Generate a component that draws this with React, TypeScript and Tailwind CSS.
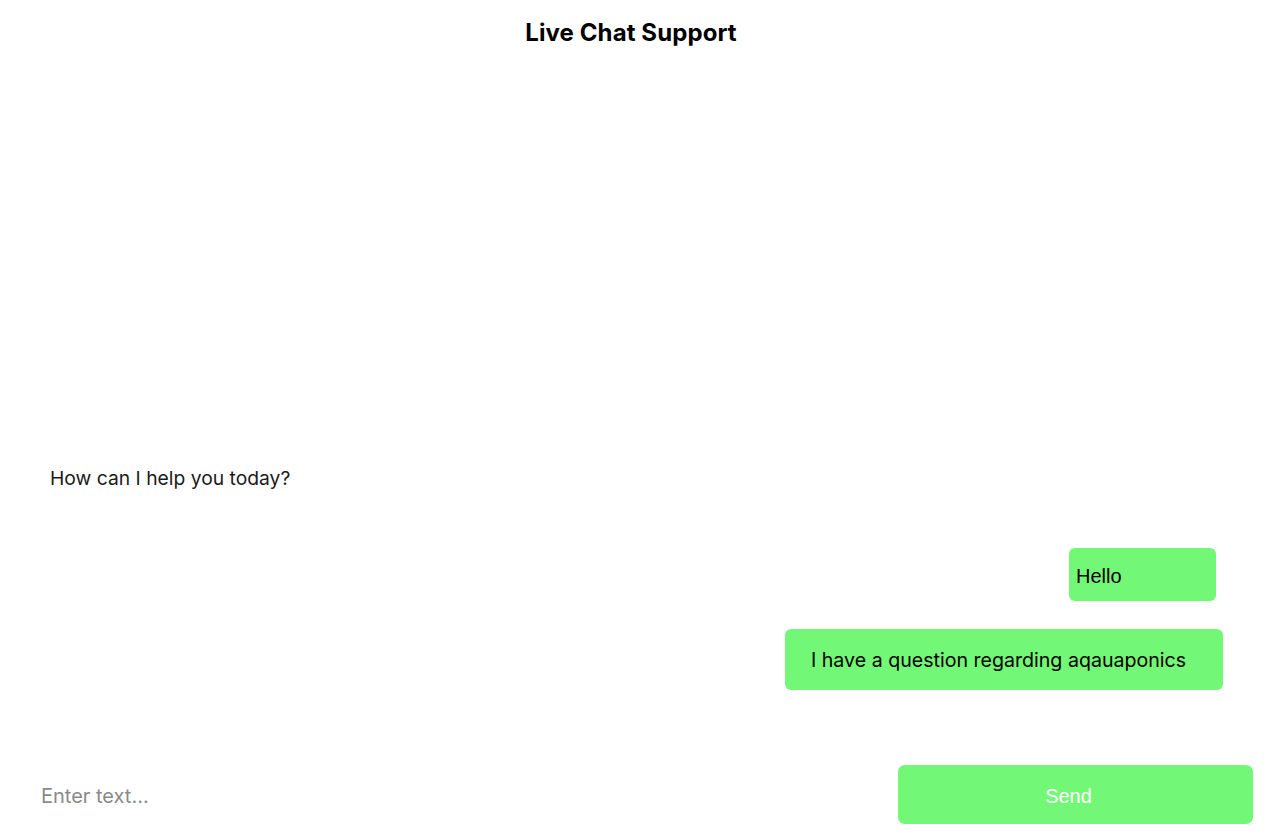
import React from "react";

export default function App() {
  return (
    <div className="flex h-[839px] w-[1284px] flex-col bg-white" style={{ fontFamily: "Inter, 'Noto Sans', sans-serif" }}>
      <div className="flex justify-center pt-[17px] pr-[22px]">
        <h1 className="text-[24px] font-bold leading-[32px] tracking-[0.1px] text-black">Live Chat Support</h1>
      </div>
      <div className="flex flex-1 flex-col justify-end">
        <div className="pl-[50px] text-[19.3px] leading-[28px] text-[#1a1a1a]">How can I help you today?</div>
        <div className="mt-[56px] flex justify-end pr-[68px]">
          <div
            className="flex h-[53px] w-[147px] items-center rounded-[6px] bg-[#72f876] pl-[7px] pt-[2px] text-[20px] text-black"
            style={{ fontFamily: "'Liberation Sans', Arial, sans-serif" }}
          >
            Hello
          </div>
        </div>
        <div className="mt-[28px] flex justify-end pr-[61px]">
          <div className="flex h-[61px] w-[438px] items-center rounded-[6px] bg-[#72f876] pl-[26px] pt-[3px] text-[19.6px] text-black">
            I have a question regarding aqauaponics
          </div>
        </div>
        <div className="mt-[75px] flex items-center pb-[15px] pl-[41px] pr-[31px]">
          <input
            className="flex-1 bg-transparent pt-[2px] text-[20px] text-black outline-none placeholder:text-[#8a8a8a]"
            placeholder="Enter text..."
          />
          <button
            className="h-[59px] w-[355px] rounded-[7px] bg-[#72f876] pr-[14px] pt-[3px] text-[20px] text-white"
            style={{ fontFamily: "'Liberation Sans', Arial, sans-serif" }}
          >
            Send
          </button>
        </div>
      </div>
    </div>
  );
}
